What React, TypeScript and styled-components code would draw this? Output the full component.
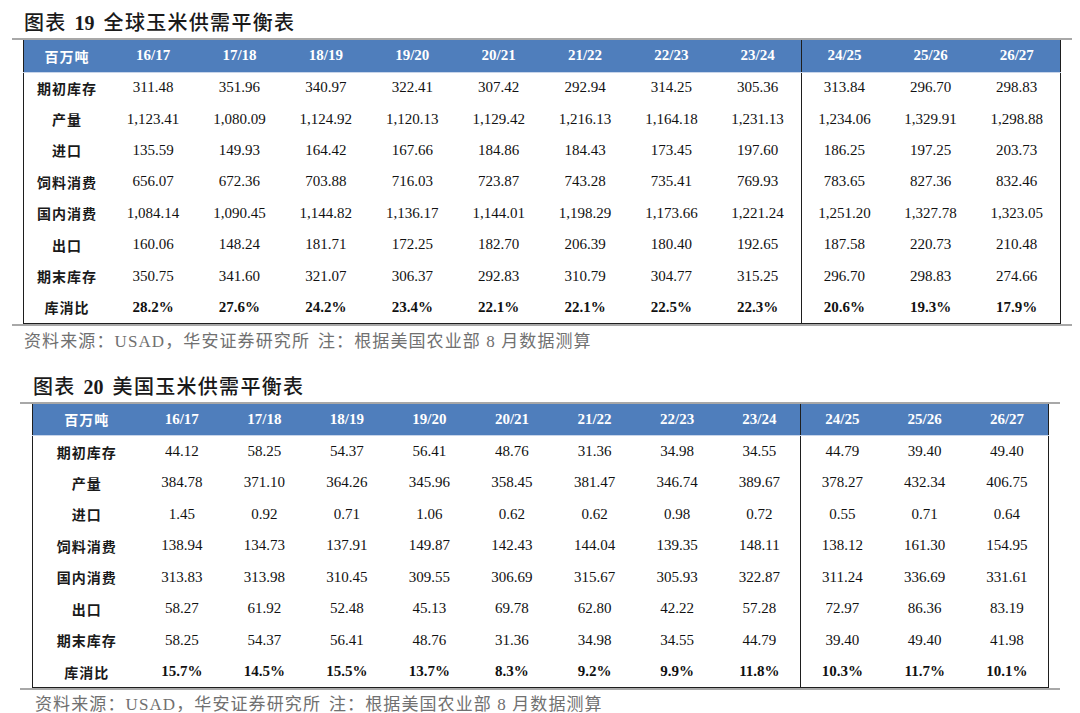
import React from "react";
import styled, { createGlobalStyle } from "styled-components";

const Global = createGlobalStyle`
  html, body { margin: 0; padding: 0; background: #ffffff; }
  body { font-family: "Liberation Serif", "Noto Sans CJK SC", serif; color: #111; }
`;

const Page = styled.div`
  width: 1080px;
  display: flex;
  flex-direction: column;
`;

const Title = styled.div<{ $indent: number; $top: number }>`
  padding-left: ${(p) => p.$indent}px;
  padding-top: ${(p) => p.$top}px;
  height: 28px;
  line-height: 28px;
  font-family: "Liberation Serif", "Noto Sans CJK SC", serif;
  font-size: 20px;
  font-weight: 500;
  letter-spacing: 1.3px;
  color: #1a1a1a;
  white-space: nowrap;
  margin-bottom: 1px;
`;

const TitleNum = styled.span`
  font-weight: 700;
  margin: 0 9px 0 8px;
  letter-spacing: 0;
`;

const Frame = styled.div<{ $left: number; $width: number; $padL: number; $padR: number }>`
  margin-left: ${(p) => p.$left}px;
  width: ${(p) => p.$width}px;
  box-sizing: border-box;
  padding: 0 ${(p) => p.$padR}px 0 ${(p) => p.$padL}px;
  border-top: 2px solid #a8a8a8;
  border-bottom: 2px solid #a8a8a8;
`;

const Table = styled.table`
  width: 100%;
  table-layout: fixed;
  border-collapse: collapse;
  border-left: 1px solid #1e1e1e;
  border-right: 1px solid #1e1e1e;
  border-bottom: 1px solid #1e1e1e;
`;

const HeadRow = styled.tr<{ $h: number }>`
  height: ${(p) => p.$h}px;
  background: #4f7ebc;
`;

const HeadCell = styled.th<{ $divider?: boolean; $cjk?: boolean }>`
  padding: 0;
  text-align: center;
  color: #ffffff;
  font-family: "Liberation Serif", "Noto Sans CJK SC", serif;
  font-size: ${(p) => (p.$cjk ? 14 : 15)}px;
  font-weight: 700;
  letter-spacing: ${(p) => (p.$cjk ? 1 : 0)}px;
  border-bottom: 1px solid #c8d5ea;
  border-left: ${(p) => (p.$divider ? "1px solid #1e1e1e" : "none")};
`;

const BodyRow = styled.tr<{ $h: number }>`
  height: ${(p) => p.$h}px;
`;

const LabelCell = styled.td`
  padding: 0;
  text-align: center;
  font-family: "Noto Sans CJK SC", sans-serif;
  font-size: 14px;
  font-weight: 700;
  letter-spacing: 1px;
  color: #1a1a1a;
`;

const ValueCell = styled.td<{ $divider?: boolean; $bold?: boolean }>`
  padding: 0;
  text-align: center;
  font-family: "Liberation Serif", serif;
  font-size: 15px;
  font-weight: ${(p) => (p.$bold ? 700 : 400)};
  color: #111;
  border-left: ${(p) => (p.$divider ? "1px solid #1e1e1e" : "none")};
`;

const Footer = styled.div<{ $indent: number; $top: number }>`
  padding-left: ${(p) => p.$indent}px;
  margin-top: ${(p) => p.$top}px;
  height: 24px;
  line-height: 24px;
  font-family: "Liberation Serif", "Noto Sans CJK SC", serif;
  font-size: 17px;
  font-weight: 400;
  letter-spacing: 1.1px;
  color: #707070;
  white-space: nowrap;
`;

const Gap = styled.span`
  display: inline-block;
  width: 8px;
`;

type Row = { label: string; values: string[]; bold?: boolean };

const seasons = ["16/17", "17/18", "18/19", "19/20", "20/21", "21/22", "22/23", "23/24", "24/25", "25/26", "26/27"];

const world: Row[] = [
  { label: "期初库存", values: ["311.48", "351.96", "340.97", "322.41", "307.42", "292.94", "314.25", "305.36", "313.84", "296.70", "298.83"] },
  { label: "产量", values: ["1,123.41", "1,080.09", "1,124.92", "1,120.13", "1,129.42", "1,216.13", "1,164.18", "1,231.13", "1,234.06", "1,329.91", "1,298.88"] },
  { label: "进口", values: ["135.59", "149.93", "164.42", "167.66", "184.86", "184.43", "173.45", "197.60", "186.25", "197.25", "203.73"] },
  { label: "饲料消费", values: ["656.07", "672.36", "703.88", "716.03", "723.87", "743.28", "735.41", "769.93", "783.65", "827.36", "832.46"] },
  { label: "国内消费", values: ["1,084.14", "1,090.45", "1,144.82", "1,136.17", "1,144.01", "1,198.29", "1,173.66", "1,221.24", "1,251.20", "1,327.78", "1,323.05"] },
  { label: "出口", values: ["160.06", "148.24", "181.71", "172.25", "182.70", "206.39", "180.40", "192.65", "187.58", "220.73", "210.48"] },
  { label: "期末库存", values: ["350.75", "341.60", "321.07", "306.37", "292.83", "310.79", "304.77", "315.25", "296.70", "298.83", "274.66"] },
  { label: "库消比", bold: true, values: ["28.2%", "27.6%", "24.2%", "23.4%", "22.1%", "22.1%", "22.5%", "22.3%", "20.6%", "19.3%", "17.9%"] },
];

const us: Row[] = [
  { label: "期初库存", values: ["44.12", "58.25", "54.37", "56.41", "48.76", "31.36", "34.98", "34.55", "44.79", "39.40", "49.40"] },
  { label: "产量", values: ["384.78", "371.10", "364.26", "345.96", "358.45", "381.47", "346.74", "389.67", "378.27", "432.34", "406.75"] },
  { label: "进口", values: ["1.45", "0.92", "0.71", "1.06", "0.62", "0.62", "0.98", "0.72", "0.55", "0.71", "0.64"] },
  { label: "饲料消费", values: ["138.94", "134.73", "137.91", "149.87", "142.43", "144.04", "139.35", "148.11", "138.12", "161.30", "154.95"] },
  { label: "国内消费", values: ["313.83", "313.98", "310.45", "309.55", "306.69", "315.67", "305.93", "322.87", "311.24", "336.69", "331.61"] },
  { label: "出口", values: ["58.27", "61.92", "52.48", "45.13", "69.78", "62.80", "42.22", "57.28", "72.97", "86.36", "83.19"] },
  { label: "期末库存", values: ["58.25", "54.37", "56.41", "48.76", "31.36", "34.98", "34.55", "44.79", "39.40", "49.40", "41.98"] },
  { label: "库消比", bold: true, values: ["15.7%", "14.5%", "15.5%", "13.7%", "8.3%", "9.2%", "9.9%", "11.8%", "10.3%", "11.7%", "10.1%"] },
];

const BalanceTable: React.FC<{ rows: Row[]; firstCol: number; otherCol: number; headH: number; rowH: number }> = ({
  rows,
  firstCol,
  otherCol,
  headH,
  rowH,
}) => (
  <Table>
    <colgroup>
      <col style={{ width: firstCol }} />
      {seasons.map((s) => (
        <col key={s} style={{ width: otherCol }} />
      ))}
    </colgroup>
    <thead>
      <HeadRow $h={headH}>
        <HeadCell $cjk>百万吨</HeadCell>
        {seasons.map((s, i) => (
          <HeadCell key={s} $divider={i === 8}>
            {s}
          </HeadCell>
        ))}
      </HeadRow>
    </thead>
    <tbody>
      {rows.map((r) => (
        <BodyRow key={r.label} $h={rowH}>
          <LabelCell>{r.label}</LabelCell>
          {r.values.map((v, i) => (
            <ValueCell key={i} $divider={i === 8} $bold={r.bold}>
              {v}
            </ValueCell>
          ))}
        </BodyRow>
      ))}
    </tbody>
  </Table>
);

const note = (
  <>
    资料来源：USAD，华安证券研究所<Gap />注：根据美国农业部 8 月数据测算
  </>
);

export default function App() {
  return (
    <Page>
      <Global />
      <Title $indent={24} $top={9}>
        图表<TitleNum>19</TitleNum>全球玉米供需平衡表
      </Title>
      <Frame $left={12} $width={1060} $padL={11} $padR={12}>
        <BalanceTable rows={world} firstCol={86.4} otherCol={86.4} headH={32} rowH={31.4} />
      </Frame>
      <Footer $indent={24} $top={4}>
        {note}
      </Footer>
      <Title $indent={33} $top={19}>
        图表<TitleNum>20</TitleNum>美国玉米供需平衡表
      </Title>
      <Frame $left={20} $width={1040} $padL={12} $padR={12}>
        <BalanceTable rows={us} firstCol={108} otherCol={82.55} headH={32} rowH={31.5} />
      </Frame>
      <Footer $indent={35} $top={3}>
        {note}
      </Footer>
    </Page>
  );
}
